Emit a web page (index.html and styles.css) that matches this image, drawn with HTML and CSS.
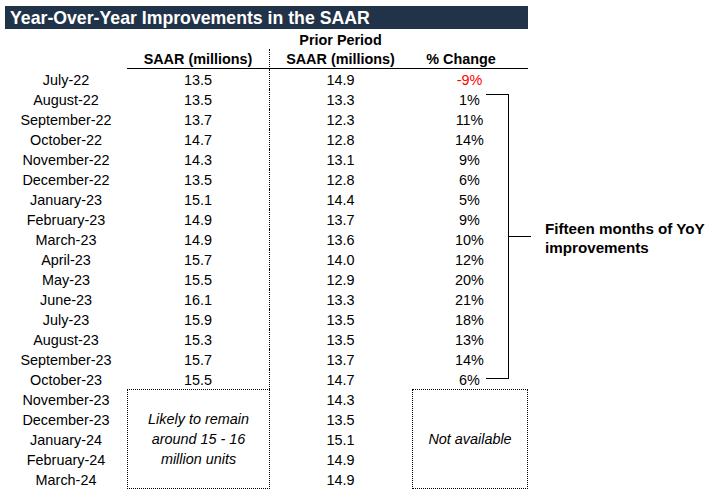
FILE: index.html
```html
<!DOCTYPE html>
<html>
<head>
<meta charset="utf-8">
<link rel="stylesheet" href="styles.css">
</head>
<body>
<div class="page">
  <div class="title">Year-Over-Year Improvements in the SAAR</div>
  <div class="table">
    <div class="hc"></div><div class="hc dv0"></div><div class="hc">Prior Period</div><div class="hc"></div>
    <div class="hc"></div><div class="hc ul dv">SAAR (millions)</div><div class="hc ul">SAAR (millions)</div><div class="hc ul pct">% Change</div>

    <div class="c">July-22</div><div class="c dv">13.5</div><div class="c">14.9</div><div class="c neg">-9%</div>
    <div class="c">August-22</div><div class="c dv">13.5</div><div class="c">13.3</div><div class="c">1%</div>
    <div class="c">September-22</div><div class="c dv">13.7</div><div class="c">12.3</div><div class="c">11%</div>
    <div class="c">October-22</div><div class="c dv">14.7</div><div class="c">12.8</div><div class="c">14%</div>
    <div class="c">November-22</div><div class="c dv">14.3</div><div class="c">13.1</div><div class="c">9%</div>
    <div class="c">December-22</div><div class="c dv">13.5</div><div class="c">12.8</div><div class="c">6%</div>
    <div class="c">January-23</div><div class="c dv">15.1</div><div class="c">14.4</div><div class="c">5%</div>
    <div class="c">February-23</div><div class="c dv">14.9</div><div class="c">13.7</div><div class="c">9%</div>
    <div class="c">March-23</div><div class="c dv">14.9</div><div class="c">13.6</div><div class="c">10%</div>
    <div class="c">April-23</div><div class="c dv">15.7</div><div class="c">14.0</div><div class="c">12%</div>
    <div class="c">May-23</div><div class="c dv">15.5</div><div class="c">12.9</div><div class="c">20%</div>
    <div class="c">June-23</div><div class="c dv">16.1</div><div class="c">13.3</div><div class="c">21%</div>
    <div class="c">July-23</div><div class="c dv">15.9</div><div class="c">13.5</div><div class="c">18%</div>
    <div class="c">August-23</div><div class="c dv">15.3</div><div class="c">13.5</div><div class="c">13%</div>
    <div class="c">September-23</div><div class="c dv">15.7</div><div class="c">13.7</div><div class="c">14%</div>
    <div class="c">October-23</div><div class="c dv">15.5</div><div class="c">14.7</div><div class="c">6%</div>

    <div class="c">November-23</div>
    <div class="box lbox">Likely to remain<br>around 15 - 16<br>million units</div>
    <div class="c">14.3</div>
    <div class="box rbox">Not available</div>
    <div class="c">December-23</div><div class="c">13.5</div>
    <div class="c">January-24</div><div class="c">15.1</div>
    <div class="c">February-24</div><div class="c">14.9</div>
    <div class="c">March-24</div><div class="c">14.9</div>
  </div>

  <div class="annot">
    <div class="bracket"></div>
    <div class="tick"></div>
    <div class="note">Fifteen months of YoY<br>improvements</div>
  </div>
</div>
</body>
</html>
```

FILE: styles.css
```css
html, body {
  margin: 0;
  padding: 0;
  background: #fff;
}

body {
  font-family: "Liberation Sans", Arial, sans-serif;
  color: #000;
}

.page {
  position: relative;
  width: 724px;
  height: 499px;
  box-sizing: border-box;
  padding: 6px 0 0 5px;
}

.title {
  width: 523px;
  height: 23px;
  box-sizing: border-box;
  padding: 2px 0 0 5px;
  background: #213348;
  color: #fff;
  font-weight: bold;
  font-size: 17.7px;
  line-height: 21px;
  white-space: nowrap;
}

.table {
  display: grid;
  grid-template-columns: 122px 143px 141px 117px;
  margin-top: 1px;
  font-size: 14.4px;
}

.hc {
  padding-top: 2px;
  line-height: 17px;
  font-weight: bold;
  text-align: center;
  white-space: nowrap;
}

.ul {
  border-bottom: 1px solid #000;
}

.pct {
  padding-right: 17px;
}

.c {
  padding-top: 3px;
  line-height: 17px;
  text-align: center;
  white-space: nowrap;
}

.dv {
  border-right: 1px dotted #000;
}

.neg {
  color: #ff0000;
}

.box {
  grid-row: span 5;
  border: 1px dotted #000;
  display: flex;
  align-items: center;
  justify-content: center;
  text-align: center;
  font-style: italic;
  line-height: 20px;
}

.rbox {
  margin-left: 1px;
}

.annot {
  position: absolute;
  left: 486px;
  top: 94px;
  height: 285px;
  display: flex;
  align-items: center;
}

.bracket {
  width: 23px;
  height: 100%;
  box-sizing: border-box;
  border-top: 1px solid #000;
  border-right: 1px solid #000;
  border-bottom: 1px solid #000;
}

.tick {
  width: 22px;
  height: 1px;
  background: #000;
}

.note {
  margin-left: 14px;
  padding-top: 2px;
  font-weight: bold;
  font-size: 15.2px;
  line-height: 19px;
  white-space: nowrap;
}
```
